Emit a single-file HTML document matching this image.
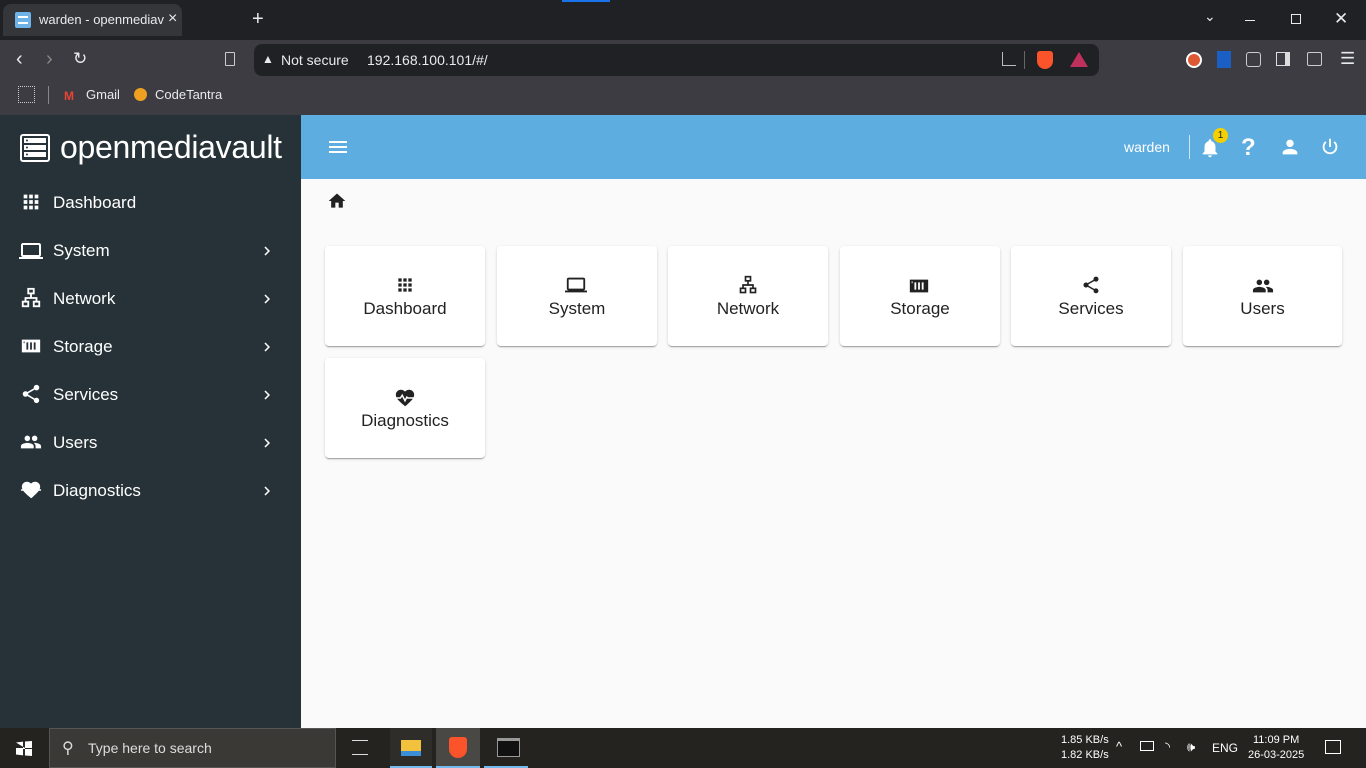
<!DOCTYPE html>
<html><head><meta charset="utf-8">
<style>
*{box-sizing:border-box;margin:0;padding:0}
body{width:1366px;height:768px;overflow:hidden;font-family:"Liberation Sans",sans-serif;background:#fafafa;position:relative}
.abs{position:absolute}
#tabbar{left:0;top:0;width:1366px;height:40px;background:#202124}
#tab{left:3px;top:4px;width:179px;height:32px;background:#35363a;border-radius:8px 8px 0 0}
#toolbar{left:0;top:40px;width:1366px;height:75px;background:#3c3c42}
#url{left:254px;top:44px;width:845px;height:32px;background:#202124;border-radius:8px}
.wt{color:#e8eaed}
#side{left:0;top:115px;width:301px;height:613px;background:#263238}
#head{left:301px;top:115px;width:1065px;height:64px;background:#5dade0}
.nav{position:absolute;left:0;width:301px;height:48px;color:#fff;font-size:17px}
.nav svg{position:absolute;left:20px;top:12px}
.nav span{position:absolute;left:53px;top:14px}
.nav .ch{position:absolute;left:258px;top:15px}
.card{position:absolute;width:160px;height:100px;background:#fff;border-radius:4px;box-shadow:0 2px 1px -1px rgba(0,0,0,.2),0 1px 1px rgba(0,0,0,.14),0 1px 3px rgba(0,0,0,.12)}
.card svg{position:absolute;left:70px;top:29px}
.card span{position:absolute;left:0;width:100%;text-align:center;top:53px;font-size:17px;color:#222}
#task{left:0;top:728px;width:1366px;height:40px;background:#25231f}
</style></head><body>
<svg width="0" height="0" style="position:absolute">
<defs>
<symbol id="i-apps" viewBox="0 0 24 24"><path d="M4 8h4V4H4v4zm6 12h4v-4h-4v4zm-6 0h4v-4H4v4zm0-6h4v-4H4v4zm6 0h4v-4h-4v4zm6-10v4h4V4h-4zm-6 4h4V4h-4v4zm6 6h4v-4h-4v4zm0 6h4v-4h-4v4z"/></symbol>
<symbol id="i-laptop" viewBox="0 0 24 24"><path d="M20 18c1.1 0 1.99-.9 1.99-2L22 6c0-1.1-.9-2-2-2H4c-1.1 0-2 .9-2 2v10c0 1.1.9 2 2 2H0v2h24v-2h-4zM4 6h16v10H4V6z"/></symbol>
<symbol id="i-net" viewBox="0 0 24 24"><g fill="none" stroke="currentColor" stroke-width="2"><rect x="9" y="2" width="6" height="5"/><rect x="3" y="16" width="6" height="5"/><rect x="15" y="16" width="6" height="5"/><path d="M12 7v5M6 16v-4h12v4"/></g></symbol>
<symbol id="i-stor" viewBox="0 0 24 24"><path d="M2 5h20v14H2z M7 8v8h2V8zm4 0v8h2V8zm4 0v8h2V8z M4 7v2h1V7z" fill-rule="evenodd"/></symbol>
<symbol id="i-share" viewBox="0 0 24 24"><path d="M18 16.08c-.76 0-1.44.3-1.96.77L8.91 12.7c.05-.23.09-.46.09-.7s-.04-.47-.09-.7l7.05-4.11c.54.5 1.25.81 2.04.81 1.66 0 3-1.34 3-3s-1.34-3-3-3-3 1.34-3 3c0 .24.04.47.09.7L8.04 9.81C7.5 9.31 6.79 9 6 9c-1.66 0-3 1.34-3 3s1.340 3 3 3c.79 0 1.5-.31 2.04-.81l7.12 4.16c-.05.21-.08.43-.08.65 0 1.61 1.31 2.920 2.92 2.92s2.92-1.31 2.92-2.92-1.31-2.92-2.92-2.92z"/></symbol>
<symbol id="i-people" viewBox="0 0 24 24"><path d="M16 11c1.66 0 2.99-1.34 2.99-3S17.66 5 16 5c-1.66 0-3 1.34-3 3s1.34 3 3 3zm-8 0c1.66 0 2.99-1.34 2.99-3S9.66 5 8 5C6.34 5 5 6.34 5 8s1.34 3 3 3zm0 2c-2.33 0-7 1.17-7 3.5V19h14v-2.5c0-2.33-4.67-3.5-7-3.5zm8 0c-.29 0-.62.02-.97.05 1.16.84 1.970 1.97 1.97 3.45V19h6v-2.5c0-2.33-4.67-3.5-7-3.5z"/></symbol>
<symbol id="i-heart" viewBox="0 0 24 24"><path d="M12 21l-1.45-1.32C5.4 15.36 2 12.28 2 8.5 2 5.42 4.42 3 7.5 3c1.74 0 3.41.81 4.5 2.090C13.09 3.81 14.76 3 16.5 3 19.58 3 22 5.42 22 8.5c0 3.78-3.4 6.86-8.55 11.54z"/><path d="M1 12h6l2-3 3 6 2-4 1 1h8" fill="none" stroke="#fff" stroke-width="1.6"/></symbol>
<symbol id="i-chev" viewBox="0 0 24 24"><path d="M10 6L8.59 7.41 13.17 12l-4.58 4.59L10 18l6-6z"/></symbol>
</defs></svg>

<div id="tabbar" class="abs"></div>
<div class="abs" style="left:562px;top:0;width:48px;height:2px;background:#1a73e8"></div>
<div id="tab" class="abs">
 <div class="abs" style="left:12px;top:8px;width:16px;height:16px;background:#6fb3e6;border-radius:2px"><div style="margin:4px 3px;height:8px;border-top:2px solid #fff;border-bottom:2px solid #fff"></div></div>
 <div class="abs wt" style="left:36px;top:8px;font-size:13px;white-space:nowrap;width:125px;overflow:hidden">warden - openmediavault Work</div>
 <div class="abs wt" style="left:165px;top:6px;font-size:16px">×</div>
</div>
<div class="abs wt" style="left:252px;top:8px;font-size:20px">+</div>
<div class="abs wt" style="left:1204px;top:8px;font-size:14px">⌄</div>
<div class="abs" style="left:1245px;top:20px;width:10px;height:1px;background:#e8eaed"></div>
<div class="abs" style="left:1291px;top:14px;width:10px;height:10px;border:1px solid #e8eaed"></div>
<div class="abs wt" style="left:1334px;top:9px;font-size:17px">✕</div>

<div id="toolbar" class="abs"></div>
<div class="abs wt" style="left:16px;top:48px;font-size:20px">‹</div>
<div class="abs" style="left:46px;top:48px;font-size:20px;color:#888">›</div>
<div class="abs wt" style="left:73px;top:49px;font-size:17px">↻</div>
<div class="abs" style="left:225px;top:52px;width:10px;height:14px;border:1.5px solid #ccc;border-radius:1px"></div>
<div id="url" class="abs"></div>
<div class="abs wt" style="left:262px;top:52px;font-size:12px">▲</div>
<div class="abs wt" style="left:281px;top:52px;font-size:14px">Not secure</div>
<div class="abs wt" style="left:367px;top:52px;font-size:14px">192.168.100.101/#/</div>
<div class="abs" style="left:1002px;top:52px;width:14px;height:14px;border:1.5px solid #bbb;border-top:none;border-right:none"></div>
<div class="abs" style="left:1024px;top:51px;width:1px;height:18px;background:#666"></div>
<div class="abs" style="left:1037px;top:51px;width:16px;height:18px;background:#fb542b;border-radius:3px 3px 8px 8px"></div>
<div class="abs" style="left:1070px;top:52px;width:0;height:0;border-left:9px solid transparent;border-right:9px solid transparent;border-bottom:15px solid #c0305d"></div>
<div class="abs" style="left:1186px;top:52px;width:16px;height:16px;border-radius:50%;background:#de5833;border:2px solid #fff"></div>
<div class="abs" style="left:1217px;top:51px;width:14px;height:17px;background:#1b5fc4"></div>
<div class="abs" style="left:1246px;top:52px;width:15px;height:15px;border:1.5px solid #ccc;border-radius:3px"></div>
<div class="abs" style="left:1276px;top:52px;width:14px;height:14px;border:1.5px solid #ddd;border-right:5px solid #ddd"></div>
<div class="abs" style="left:1307px;top:52px;width:15px;height:14px;border:1.5px solid #ccc;border-radius:2px"></div>
<div class="abs wt" style="left:1340px;top:49px;font-size:17px">☰</div>
<div class="abs" style="left:18px;top:86px;width:17px;height:17px;border:1.5px dotted #ccc"></div>
<div class="abs" style="left:48px;top:86px;width:1px;height:18px;background:#888"></div>
<div class="abs" style="left:64px;top:89px;font-size:12px;font-weight:bold;color:#ea4335">M</div>
<div class="abs wt" style="left:86px;top:87px;font-size:13px">Gmail</div>
<div class="abs" style="left:134px;top:88px;width:13px;height:13px;border-radius:50%;background:#f0a020"></div>
<div class="abs wt" style="left:155px;top:87px;font-size:13px">CodeTantra</div>

<div id="side" class="abs">
 <svg class="abs" style="left:20px;top:19px" width="30" height="28" viewBox="0 0 30 28"><rect x="1" y="1" width="28" height="26" rx="2" fill="none" stroke="#fff" stroke-width="2"/><rect x="4" y="4" width="22" height="5" fill="#fff"/><rect x="4" y="11" width="22" height="5" fill="#fff"/><rect x="4" y="18" width="22" height="5" fill="#fff"/><circle cx="7" cy="6.5" r="1" fill="#263238"/><circle cx="7" cy="13.5" r="1" fill="#263238"/><circle cx="7" cy="20.5" r="1" fill="#263238"/></svg>
 <div class="abs" style="left:60px;top:14px;font-size:32px;color:#fff;letter-spacing:-0.3px">openmediavault</div>
</div>
<div class="nav" style="top:179px"><svg width="22" height="22" fill="#fff"><use href="#i-apps"/></svg><span>Dashboard</span></div>
<div class="nav" style="top:227px"><svg width="24" height="24" fill="#fff" style="left:19px"><use href="#i-laptop"/></svg><span>System</span><svg class="ch" width="18" height="18" fill="#fff"><use href="#i-chev"/></svg></div>
<div class="nav" style="top:275px"><svg width="22" height="22" style="color:#fff"><use href="#i-net"/></svg><span>Network</span><svg class="ch" width="18" height="18" fill="#fff"><use href="#i-chev"/></svg></div>
<div class="nav" style="top:323px"><svg width="22" height="22" fill="#fff"><use href="#i-stor"/></svg><span>Storage</span><svg class="ch" width="18" height="18" fill="#fff"><use href="#i-chev"/></svg></div>
<div class="nav" style="top:371px"><svg width="22" height="22" fill="#fff"><use href="#i-share"/></svg><span>Services</span><svg class="ch" width="18" height="18" fill="#fff"><use href="#i-chev"/></svg></div>
<div class="nav" style="top:419px"><svg width="22" height="22" fill="#fff"><use href="#i-people"/></svg><span>Users</span><svg class="ch" width="18" height="18" fill="#fff"><use href="#i-chev"/></svg></div>
<div class="nav" style="top:467px"><svg width="22" height="22" fill="#fff"><use href="#i-heart"/></svg><span>Diagnostics</span><svg class="ch" width="18" height="18" fill="#fff"><use href="#i-chev"/></svg></div>

<div id="head" class="abs">
 <div class="abs" style="left:28px;top:26px;width:18px;height:2px;background:#fff;box-shadow:0 5px 0 #fff,0 10px 0 #fff"></div>
 <div class="abs" style="left:823px;top:24px;font-size:14px;color:#fff">warden</div>
 <div class="abs" style="left:888px;top:20px;width:1px;height:24px;background:#fff;opacity:.7"></div>
 <svg class="abs" style="left:898px;top:21px" width="22" height="24" viewBox="0 0 24 24" fill="#fff"><path d="M12 22c1.1 0 2-.9 2-2h-4c0 1.1.9 2 2 2zm6-6v-5c0-3.07-1.63-5.64-4.5-6.32V4c0-.83-.67-1.5-1.5-1.5s-1.5.67-1.5 1.5v.68C7.64 5.36 6 7.92 6 11v5l-2 2v1h16v-1l-2-2z"/></svg>
 <div class="abs" style="left:912px;top:13px;width:15px;height:15px;border-radius:50%;background:#f5d000;font-size:10px;text-align:center;line-height:15px;color:#222">1</div>
 <div class="abs" style="left:940px;top:19px;font-size:24px;color:#fff;font-weight:bold">?</div>
 <svg class="abs" style="left:978px;top:21px" width="22" height="22" viewBox="0 0 24 24" fill="#fff"><path d="M12 12c2.21 0 4-1.79 4-4s-1.79-4-4-4-4 1.79-4 4 1.79 4 4 4zm0 2c-2.67 0-8 1.34-8 4v2h16v-2c0-2.66-5.33-4-8-4z"/></svg>
 <svg class="abs" style="left:1018px;top:21px" width="22" height="22" viewBox="0 0 24 24" fill="none" stroke="#fff" stroke-width="2"><path d="M12 3v9"/><path d="M7.5 6.5a7 7 0 1 0 9 0"/></svg>
</div>

<svg class="abs" style="left:327px;top:191px" width="20" height="20" viewBox="0 0 24 24" fill="#222"><path d="M10 20v-6h4v6h5v-8h3L12 3 2 12h3v8z"/></svg>

<div class="card" style="left:325px;top:246px"><svg width="20" height="20" fill="#222"><use href="#i-apps"/></svg><span>Dashboard</span></div>
<div class="card" style="left:497px;top:246px"><svg width="22" height="22" fill="#222" style="left:68px;top:28px"><use href="#i-laptop"/></svg><span>System</span></div>
<div class="card" style="left:668px;top:246px"><svg width="20" height="20" style="color:#222"><use href="#i-net"/></svg><span>Network</span></div>
<div class="card" style="left:840px;top:246px"><svg width="22" height="22" fill="#222" style="left:68px"><use href="#i-stor"/></svg><span>Storage</span></div>
<div class="card" style="left:1011px;top:246px"><svg width="20" height="20" fill="#222"><use href="#i-share"/></svg><span>Services</span></div>
<div class="card" style="left:1183px;top:246px;width:159px"><svg width="22" height="22" fill="#222" style="left:69px"><use href="#i-people"/></svg><span>Users</span></div>
<div class="card" style="left:325px;top:358px"><svg width="22" height="22" fill="#222" style="left:69px"><use href="#i-heart"/></svg><span>Diagnostics</span></div>

<div id="task" class="abs">
 <div class="abs" style="left:16px;top:13px;width:16px;height:15px;background:#fff;clip-path:polygon(0 10%,44% 4%,44% 47%,0 47%,0 53%,44% 53%,44% 96%,0 90%,0 53%,50% 53%,50% 53%,56% 53%,100% 53%,100% 100%,56% 97%,56% 53%,56% 47%,100% 47%,100% 0,56% 3%,56% 47%)"></div>
 <div class="abs" style="left:49px;top:0;width:287px;height:40px;background:#3a3936;border:1px solid #555"></div>
 <div class="abs" style="left:62px;top:10px;font-size:16px;color:#ddd">⚲</div>
 <div class="abs" style="left:88px;top:12px;font-size:14px;color:#ddd">Type here to search</div>
 <div class="abs" style="left:352px;top:12px;width:16px;height:15px;border:1.5px solid #ddd;border-left:none;border-right:none"></div>
 <div class="abs" style="left:390px;top:0;width:42px;height:40px;background:#2f2d29"></div>
 <div class="abs" style="left:401px;top:12px;width:20px;height:16px;background:#f2c23c;border-bottom:5px solid #3b8ed8"></div>
 <div class="abs" style="left:390px;top:38px;width:42px;height:2px;background:#76b9ed"></div>
 <div class="abs" style="left:436px;top:0;width:44px;height:40px;background:#4a4844"></div>
 <div class="abs" style="left:449px;top:9px;width:18px;height:21px;background:#fb542b;border-radius:3px 3px 9px 9px"></div>
 <div class="abs" style="left:436px;top:38px;width:44px;height:2px;background:#76b9ed"></div>
 <div class="abs" style="left:497px;top:10px;width:23px;height:19px;background:#111;border:1px solid #999;border-top:3px solid #999"></div>
 <div class="abs" style="left:484px;top:38px;width:44px;height:2px;background:#76b9ed"></div>
 <div class="abs" style="left:1061px;top:5px;font-size:11px;color:#fff;line-height:15px">1.85 KB/s<br>1.82 KB/s</div>
 <div class="abs" style="left:1116px;top:11px;font-size:13px;color:#fff">^</div>
 <div class="abs" style="left:1140px;top:13px;width:14px;height:10px;border:1.5px solid #fff"></div>
 <div class="abs" style="left:1165px;top:11px;font-size:13px;color:#fff">◝</div>
 <div class="abs" style="left:1187px;top:11px;font-size:13px;color:#fff">🕪</div>
 <div class="abs" style="left:1212px;top:13px;font-size:12px;color:#fff">ENG</div>
 <div class="abs" style="left:1248px;top:5px;font-size:11px;color:#fff;line-height:15px;text-align:center">11:09 PM<br>26-03-2025</div>
 <div class="abs" style="left:1325px;top:12px;width:16px;height:14px;border:1.5px solid #fff"></div>
</div>
</body></html>
